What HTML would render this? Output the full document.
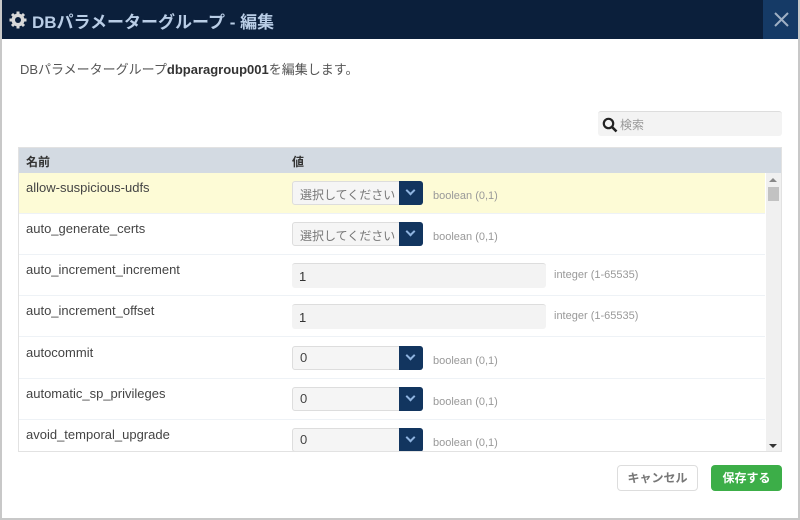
<!DOCTYPE html>
<html><head><meta charset="utf-8"><style>
*{box-sizing:border-box;margin:0;padding:0}
body{width:800px;height:520px;overflow:hidden;background:#fff;font-family:"Liberation Sans","Noto Sans CJK JP",sans-serif;color:#333;position:relative}
.frame{position:absolute;left:0;top:0;width:800px;height:520px;border:2px solid #c8c8c8;border-top:none}
.hdr{position:absolute;left:0;top:0;width:800px;height:39px;background:#0b1f3b}
.hdr .t{position:absolute;left:32px;top:8px;color:#b9cde6;font-size:17px;font-weight:bold}
.close{position:absolute;left:763px;top:0;width:37px;height:39px;background:#153a66}
.p{position:absolute;left:20px;top:59px;font-size:13px;color:#555}
.srch{position:absolute;left:598px;top:111px;width:184px;height:25px;background:#f3f3f3;border-radius:3px;border-top:1px solid #ddd}
.srch span{position:absolute;left:22px;top:4px;font-size:12px;color:#999}
.tbl{position:absolute;left:18px;top:147px;width:764px;height:305px;border:1px solid #e2e2e2;overflow:hidden}
.th{height:25px;background:#d3dae2;font-size:12px;font-weight:bold;position:relative}
.th span{position:absolute;top:5px}
.row{position:absolute;left:0;width:746px;height:41px;border-bottom:1px solid #eef2f6}
.row .n{position:absolute;left:7px;top:7px;font-size:13px;color:#444}
.sel{position:absolute;left:273px;top:8px;width:131px;height:24px;border:1px solid #ddd;border-radius:3px;background:#f5f5f5;font-size:12px;color:#777;padding:4px 0 0 7px;white-space:nowrap}
.sel.v{color:#444;font-size:13px;padding-top:3px}
.sel b{position:absolute;right:-1px;top:-1px;width:24px;height:24px;background:#12355f;border-radius:0 3px 3px 0}
.sel b:after{content:"";position:absolute;left:8px;top:6px;width:5px;height:5px;border-right:2px solid #8fb4e0;border-bottom:2px solid #8fb4e0;transform:rotate(45deg)}
.inp{position:absolute;left:273px;top:8px;width:254px;height:25px;border-radius:3px;background:#f3f3f3;border-top:1px solid #ddd;font-size:13px;padding:5px 0 0 7px}
.hint{position:absolute;top:17px;font-size:11px;color:#999}
.sb{position:absolute;left:747px;top:25px;width:15px;height:280px;background:#f0f0f0}
.btn{position:absolute;top:465px;height:26px;border-radius:4px;font-size:12px;font-weight:bold;text-align:center;line-height:24px}
</style></head><body>
<div class="hdr">
<svg style="position:absolute;left:9px;top:11px" width="18" height="18" viewBox="0 0 18 18"><g fill="#d8d8d8"><circle cx="9" cy="9" r="6.5"/><g stroke="#d8d8d8" stroke-width="3"><line x1="9" y1="0.5" x2="9" y2="17.5"/><line x1="0.5" y1="9" x2="17.5" y2="9"/><line x1="3" y1="3" x2="15" y2="15"/><line x1="15" y1="3" x2="3" y2="15"/></g></g><circle cx="9" cy="9" r="3" fill="#0b1f3b"/></svg>
<div class="t">DBパラメーターグループ - 編集</div>
<div class="close"><svg style="position:absolute;left:11px;top:12px" width="15" height="15" viewBox="0 0 15 15"><path d="M1 1L14 14M14 1L1 14" stroke="#9fb0c4" stroke-width="2"/></svg></div>
</div>
<div class="frame"></div>
<div class="p">DBパラメーターグループ<b style="color:#333">dbparagroup001</b>を編集します。</div>
<div class="srch"><svg style="position:absolute;left:4px;top:5px" width="16" height="16" viewBox="0 0 16 16"><circle cx="6.5" cy="6.5" r="4.7" fill="none" stroke="#222" stroke-width="2.2"/><line x1="10" y1="10" x2="14.5" y2="14.5" stroke="#222" stroke-width="2.6"/></svg><span>検索</span></div>
<div class="tbl">
<div class="th"><span style="left:7px">名前</span><span style="left:273px">値</span></div>
<div class="row" style="top:25px;background:#fdfbd6"><div class="n">allow-suspicious-udfs</div><div class="sel">選択してください<b></b></div><div class="hint" style="left:414px">boolean (0,1)</div></div>
<div class="row" style="top:66px"><div class="n">auto_generate_certs</div><div class="sel">選択してください<b></b></div><div class="hint" style="left:414px">boolean (0,1)</div></div>
<div class="row" style="top:107px"><div class="n">auto_increment_increment</div><div class="inp">1</div><div class="hint" style="left:535px;top:14px">integer (1-65535)</div></div>
<div class="row" style="top:148px"><div class="n">auto_increment_offset</div><div class="inp">1</div><div class="hint" style="left:535px;top:14px">integer (1-65535)</div></div>
<div class="row" style="top:190px"><div class="n">autocommit</div><div class="sel v">0<b></b></div><div class="hint" style="left:414px">boolean (0,1)</div></div>
<div class="row" style="top:231px"><div class="n">automatic_sp_privileges</div><div class="sel v">0<b></b></div><div class="hint" style="left:414px">boolean (0,1)</div></div>
<div class="row" style="top:272px"><div class="n">avoid_temporal_upgrade</div><div class="sel v">0<b></b></div><div class="hint" style="left:414px">boolean (0,1)</div></div>
<div class="sb"><div style="position:absolute;left:3px;top:5px;border:4px solid transparent;border-bottom:4px solid #888;border-top:none"></div><div style="position:absolute;left:2px;top:14px;width:11px;height:14px;background:#c2c2c2"></div><div style="position:absolute;left:3px;bottom:5px;border:4px solid transparent;border-top:4px solid #333;border-bottom:none"></div></div>
</div>
<div class="btn" style="left:617px;width:81px;border:1px solid #ddd;color:#777;background:#fff">キャンセル</div>
<div class="btn" style="left:711px;width:71px;background:#3cae48;color:#fff;line-height:26px">保存する</div>
</body></html>
